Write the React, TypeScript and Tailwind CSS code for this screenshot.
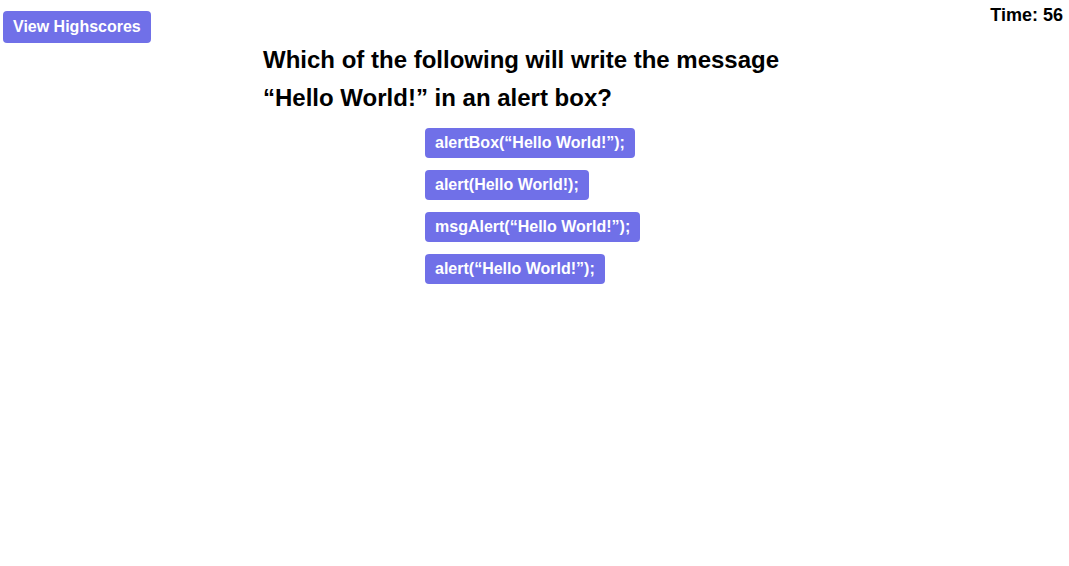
const answers = [
  'alertBox(“Hello World!”);',
  'alert(Hello World!);',
  'msgAlert(“Hello World!”);',
  'alert(“Hello World!”);',
];

export default function App() {
  return (
    <div className="min-h-screen bg-white text-black" style={{ fontFamily: '"Liberation Sans", Arial, sans-serif' }}>
      {/* Header */}
      <header className="flex items-start justify-between">
        <button
          type="button"
          className="ml-[3px] mt-[11px] h-8 rounded-[4px] bg-[#7070e8] px-[10px] text-base font-bold text-white"
        >
          View Highscores
        </button>
        <div className="pr-[6px] pt-[6px] text-[18px] font-bold leading-none">Time: 56</div>
      </header>

      {/* Question */}
      <main className="mx-auto w-[543px]">
        <h1 className="mt-[-2px] text-2xl font-bold leading-[38px]">
          Which of the following will write the message “Hello World!” in an alert box?
        </h1>
        <ul className="ml-[162px] mt-[11px] flex flex-col items-start gap-3">
          {answers.map((a) => (
            <li key={a}>
              <button
                type="button"
                className="h-[30px] rounded-[4px] bg-[#7070e8] px-[10px] text-base font-bold text-white"
              >
                {a}
              </button>
            </li>
          ))}
        </ul>
      </main>
    </div>
  );
}
